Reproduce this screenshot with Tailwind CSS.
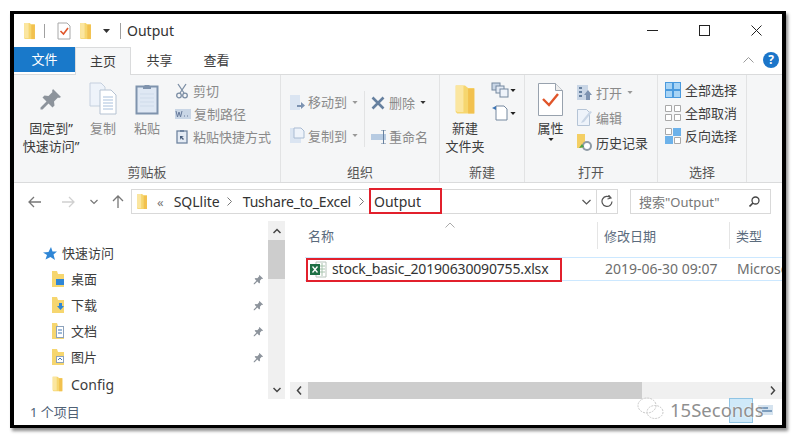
<!DOCTYPE html>
<html lang="zh">
<head>
<meta charset="UTF-8">
<title>Output</title>
<script src="https://cdn.jsdelivr.net/npm/@tailwindcss/browser@4"></script>
</head>
<body class="bg-white w-[793px] h-[440px] overflow-hidden [font-family:'Noto_Sans','Noto_Sans_CJK_SC',sans-serif] text-[13px] leading-[18px] text-[#3c3c3c]">

<svg class="hidden">
  <symbol id="folder" viewBox="0 0 12 20"><path d="M0 1h6l2 1.500h4V19H1l-1-1z" fill="#f6d66f"/><path d="M0 1h5v17H1l-1-1z" fill="#fbe6a0"/><path d="M8 3h4v16H8z" fill="#f2c14f"/></symbol>
  <symbol id="pin" viewBox="0 0 24 24"><path d="M14 2l8 8-2 1-1-.5-4 4 .5 4-2 2-4-4-6 6-2 0 0-2 6-6-4-4 2-2 4 .5 4-4-.500-1z" fill="#8d949c"/></symbol>
  <symbol id="caret" viewBox="0 0 7 4"><path d="M0 0h7L3.500 4z"/></symbol>
</svg>

<div class="relative ml-[10px] mt-[11px] w-[776px] h-[417px] border-x-[4px] border-t-[3px] border-b-[3px] border-black bg-white shadow-[2px_3px_3px_rgba(0,0,0,0.45)] flex flex-col">

  <!-- title bar -->
  <div class="h-[33px] flex items-center shrink-0">
    <svg class="ml-[10px] w-[11px] h-[18px]"><use href="#folder"/></svg>
    <div class="ml-[9px] w-px h-[14px] bg-[#a0a0a0]"></div>
    <svg class="ml-[12px] w-[14px] h-[18px]" viewBox="0 0 14 18"><path d="M1 1h9l3 3v13H1z" fill="#fff" stroke="#a8a8a8"/><path d="M3.500 9l3 3 4.500-6" fill="none" stroke="#e0552a" stroke-width="1.600"/></svg>
    <svg class="ml-[9px] w-[11px] h-[18px]"><use href="#folder"/></svg>
    <svg class="ml-[12px] w-[7px] h-[4px] fill-[#333]"><use href="#caret"/></svg>
    <div class="ml-[10px] w-px h-[16px] bg-[#a0a0a0]"></div>
    <span class="ml-[6px] text-[14px] text-[#333]">Output</span>
    <div class="ml-auto flex items-center pr-[20px]">
      <div class="w-[11px] h-px bg-[#222]"></div>
      <div class="ml-[41px] w-[11px] h-[11px] border border-[#222]"></div>
      <svg class="ml-[41px] w-[11px] h-[11px]" viewBox="0 0 11 11"><path d="M.5.5l10 10M10.500.5l-10 10" stroke="#222" fill="none"/></svg>
    </div>
  </div>

  <!-- tabs -->
  <div class="h-[27px] flex shrink-0 relative z-10">
    <div class="w-[61px] h-[25px] bg-[#1979ca] text-white text-center leading-[25px]">文件</div>
    <div class="w-[56px] h-[28px] bg-[#f5f6f7] border-x border-t border-[#dadbdc] text-center leading-[26px]">主页</div>
    <div class="w-[57px] text-center leading-[26px]">共享</div>
    <div class="w-[57px] text-center leading-[26px]">查看</div>
    <div class="ml-auto flex items-center h-[25px] pr-[3px]">
      <svg class="w-[11px] h-[7px] mr-[9px]" viewBox="0 0 11 7"><path d="M.5 6.500l5-5 5 5" fill="none" stroke="#9a9a9a"/></svg>
      <div class="w-[16px] h-[16px] rounded-full bg-[#1b75c9] text-white text-[12px] font-bold leading-[16px] text-center">?</div>
    </div>
  </div>

  <!-- ribbon -->
  <div class="h-[109px] shrink-0 bg-[#f5f6f7] border-y border-[#dadbdc] flex">

    <div class="w-[267px] border-r border-[#e2e3e4] flex flex-col">
      <div class="h-[88px] flex pl-[6px]">
        <div class="w-[62px] flex flex-col items-center">
          <div class="h-[44px] pt-[12px]"><svg class="w-[24px] h-[24px]"><use href="#pin"/></svg></div>
          <span>固定到”</span><span>快速访问”</span>
        </div>
        <div class="ml-[2px] w-[38px] flex flex-col items-center text-[#8a8a8a]">
          <div class="h-[44px] pt-[7px]">
            <svg class="w-[28px] h-[33px]" viewBox="0 0 28 33"><path d="M1 1h11l4 4v19H1z" fill="#eef3fa" stroke="#c5d0de"/><path d="M11 8h11l5 5v19H11z" fill="#fff" stroke="#b5c2d2"/><path d="M14 15h10M14 18h10M14 21h10M14 24h10M14 27h10" stroke="#a9c0dc"/></svg>
          </div>
          <span>复制</span>
        </div>
        <div class="ml-[6px] w-[38px] flex flex-col items-center text-[#8a8a8a]">
          <div class="h-[44px] pt-[7px]">
            <svg class="w-[24px] h-[33px]" viewBox="0 0 24 33"><rect x="1.500" y="4.500" width="21" height="27" fill="#dfe8f4" stroke="#7f93ad" stroke-width="2"/><path d="M8 5l2-2h4l2 2v2H8z" fill="#7f93ad"/><path d="M5 12h14M5 16h14M5 20h14M5 24h14" stroke="#cfdbea"/></svg>
          </div>
          <span>粘贴</span>
        </div>
        <div class="ml-[9px] flex flex-col pt-[4px] text-[#8a8a8a]">
          <div class="h-[23px] flex items-center">
            <svg class="w-[12px] h-[16px] ml-[1px] mr-[5px]" viewBox="0 0 12 16"><path d="M2 1l6 9M10 1L4 10" stroke="#7c8ea5" stroke-width="1.300"/><circle cx="3" cy="12.500" r="2.300" fill="none" stroke="#7c8ea5" stroke-width="1.300"/><circle cx="9" cy="12.500" r="2.300" fill="none" stroke="#7c8ea5" stroke-width="1.300"/></svg>
            <span>剪切</span>
          </div>
          <div class="h-[23px] flex items-center">
            <svg class="w-[16px] h-[10px] mr-[3px]" viewBox="0 0 16 10"><rect width="16" height="10" fill="#c9d6e6"/><path d="M1 2l1.500 6L4 3l1.500 5L7 2" fill="none" stroke="#66799a"/><path d="M9 7h1M12 7h1" stroke="#66799a"/></svg>
            <span>复制路径</span>
          </div>
          <div class="h-[23px] flex items-center">
            <svg class="w-[12px] h-[15px] ml-[1px] mr-[5px]" viewBox="0 0 12 15"><rect x="1" y="2" width="10" height="12" fill="#e4ebf4" stroke="#6f84a0" stroke-width="1.300"/><path d="M4 1h4v2H4z" fill="#6f84a0"/><path d="M4 11l0-4 4 0-2 1 2 2-1 1-2-2z" fill="#4a5f7d"/></svg>
            <span>粘贴快捷方式</span>
          </div>
        </div>
      </div>
      <div class="text-center text-[#555]">剪贴板</div>
    </div>

    <div class="w-[159px] border-r border-[#e2e3e4] flex flex-col">
      <div class="h-[88px] flex pl-[9px] pt-[16px] text-[#8a8a8a]">
        <div class="w-[75px] border-r border-[#e2e3e4] h-[56px] flex flex-col gap-[11px]">
          <div class="h-[23px] flex items-center">
            <svg class="w-[15px] h-[17px] mr-[3px]" viewBox="0 0 15 17"><path d="M0 1h10v15H0z" fill="#dbe5f2"/><path d="M7 11h4V8l4 3.500L11 15v-2H7z" fill="#7d93b1"/></svg>
            <span>移动到</span><svg class="ml-[5px] w-[6px] h-[3px] fill-[#999]"><use href="#caret"/></svg>
          </div>
          <div class="h-[23px] flex items-center">
            <svg class="w-[15px] h-[17px] mr-[3px]" viewBox="0 0 15 17"><path d="M0 1h11v15H0z" fill="#dbe5f2"/><path d="M4 1h7l3 3v7H4z" fill="#eef3fa" stroke="#a9bbd2"/></svg>
            <span>复制到</span><svg class="ml-[5px] w-[6px] h-[3px] fill-[#999]"><use href="#caret"/></svg>
          </div>
        </div>
        <div class="pl-[6px] flex flex-col gap-[11px]">
          <div class="h-[23px] flex items-center">
            <svg class="w-[14px] h-[14px] mr-[4px]" viewBox="0 0 14 14"><path d="M1.500 1.500l11 11M12.500 1.500l-11 11" stroke="#66809f" stroke-width="2.600"/></svg>
            <span>删除</span><svg class="ml-[5px] w-[6px] h-[3px] fill-[#333]"><use href="#caret"/></svg>
          </div>
          <div class="h-[23px] flex items-center">
            <svg class="w-[16px] h-[14px] mr-[2px]" viewBox="0 0 16 14"><rect y="4" width="15" height="6" fill="#b7cbe2"/><path d="M10 0h5M10 14h5M12.500 0v14" stroke="#66809f"/></svg>
            <span>重命名</span>
          </div>
        </div>
      </div>
      <div class="text-center text-[#555]">组织</div>
    </div>

    <div class="w-[85px] border-r border-[#e2e3e4] flex flex-col">
      <div class="h-[88px] flex pl-[4px]">
        <div class="w-[42px] flex flex-col items-center">
          <div class="h-[44px] pt-[9px]"><svg class="w-[22px] h-[31px]"><use href="#folder"/></svg></div>
          <span>新建</span><span>文件夹</span>
        </div>
        <div class="ml-[5px] flex flex-col pt-[7px] gap-[7px]">
          <div class="flex items-center">
            <svg class="w-[18px] h-[16px]" viewBox="0 0 18 16"><rect x="1" y="1" width="8" height="7" fill="#c9d6e6" stroke="#75889f"/><rect x="5" y="4" width="8" height="7" fill="#e4ebf4" stroke="#75889f"/><rect x="9" y="7" width="8" height="8" fill="#eef3fa" stroke="#75889f"/></svg>
            <svg class="ml-[1px] w-[6px] h-[3px] fill-[#222]"><use href="#caret"/></svg>
          </div>
          <div class="flex items-center">
            <svg class="w-[18px] h-[16px]" viewBox="0 0 18 16"><path d="M5 1h8l3 3v11H5z" fill="#fff" stroke="#75889f"/><path d="M1 3l4-2v4z" fill="#3f76b5"/></svg>
            <svg class="ml-[1px] w-[6px] h-[3px] fill-[#222]"><use href="#caret"/></svg>
          </div>
        </div>
      </div>
      <div class="text-center text-[#555]">新建</div>
    </div>

    <div class="w-[133px] border-r border-[#e2e3e4] flex flex-col">
      <div class="h-[88px] flex pl-[13px]">
        <div class="w-[25px] flex flex-col items-center">
          <div class="h-[44px] pt-[8px]">
            <svg class="w-[25px] h-[33px]" viewBox="0 0 25 33"><path d="M.5.5h17l7 7v25H.5z" fill="#fff" stroke="#98a2ae"/><path d="M17.500.5v7h7" fill="#eee" stroke="#98a2ae"/><path d="M5 16l6 6 9-11" fill="none" stroke="#e0552a" stroke-width="2.400"/></svg>
          </div>
          <span class="whitespace-nowrap">属性</span>
          <svg class="mt-[1px] w-[6px] h-[3px] fill-[#222]"><use href="#caret"/></svg>
        </div>
        <div class="ml-[14px] flex flex-col pt-[6px] gap-[2px] text-[#8a8a8a]">
          <div class="h-[23px] flex items-center">
            <svg class="w-[15px] h-[17px] mr-[4px]" viewBox="0 0 15 17"><path d="M0 1h11v15H0z" fill="#c9d6e6"/><path d="M2 4h3M2 8h3M2 12h3" stroke="#66809f" stroke-width="2"/><path d="M11 6l4 5h-2v5H9v-5H7z" fill="#7d93b1"/></svg>
            <span>打开</span><svg class="ml-[5px] w-[6px] h-[3px] fill-[#999]"><use href="#caret"/></svg>
          </div>
          <div class="h-[23px] flex items-center">
            <svg class="w-[15px] h-[17px] mr-[4px]" viewBox="0 0 15 17"><path d="M.5.5h9l3 3v13H.5z" fill="#eef3fa" stroke="#b5c4d6"/><path d="M5 12l8-10 2 1-8 10-3 1z" fill="#c9d6e6"/></svg>
            <span>编辑</span>
          </div>
          <div class="h-[23px] flex items-center text-[#3c3c3c]">
            <svg class="w-[15px] h-[17px] mr-[4px]" viewBox="0 0 15 17"><path d="M0 0h8v14H0z" fill="#f4cf64"/><circle cx="10" cy="12" r="5" fill="#8e9aa4"/><circle cx="10" cy="12" r="3" fill="#fff"/><path d="M2 14l3-4 2 3z" fill="#4ea24a"/></svg>
            <span>历史记录</span>
          </div>
        </div>
      </div>
      <div class="text-center text-[#555]">打开</div>
    </div>

    <div class="w-[89px] border-r border-[#e2e3e4] flex flex-col">
      <div class="h-[88px] pl-[7px] pt-[3px]">
        <div class="h-[23px] flex items-center">
          <svg class="w-[16px] h-[16px] mr-[4px]" viewBox="0 0 16 16"><path d="M0 0h16v16H0z" fill="#4a9ade"/><path d="M1 1h6v6H1zM9 1h6v6H9zM1 9h6v6H1zM9 9h6v6H9z" fill="#a8d4f5"/></svg>
          <span>全部选择</span>
        </div>
        <div class="h-[23px] flex items-center">
          <svg class="w-[16px] h-[16px] mr-[4px]" viewBox="0 0 16 16"><path d="M.5.5h6v6h-6zM9.500.5h6v6h-6zM.5 9.500h6v6h-6zM9.500 9.500h6v6h-6z" fill="#fff" stroke="#a9a9a9"/></svg>
          <span>全部取消</span>
        </div>
        <div class="h-[23px] flex items-center">
          <svg class="w-[16px] h-[16px] mr-[4px]" viewBox="0 0 16 16"><path d="M.5.500h6v6h-6zM9.500 9.500h6v6h-6z" fill="#fff" stroke="#a9a9a9"/><path d="M8 0h8v8H8zM0 8h8v8H0z" fill="#6db2ea"/></svg>
          <span>反向选择</span>
        </div>
      </div>
      <div class="text-center text-[#555]">选择</div>
    </div>
  </div>

  <!-- address row -->
  <div class="h-[38px] shrink-0 flex items-center pb-[1px]">
    <svg class="ml-[14px] w-[13px] h-[12px]" viewBox="0 0 13 12"><path d="M13 6H1M6 1L1 6l5 5" fill="none" stroke="#777" stroke-width="1.300"/></svg>
    <svg class="ml-[21px] w-[13px] h-[12px]" viewBox="0 0 13 12"><path d="M0 6h12M7 1l5 5-5 5" fill="none" stroke="#d0d0d0" stroke-width="1.300"/></svg>
    <svg class="ml-[15px] w-[8px] h-[6px]" viewBox="0 0 8 6"><path d="M.5 1L4 4.500 7.500 1" fill="none" stroke="#777" stroke-width="1.200"/></svg>
    <svg class="ml-[14px] w-[12px] h-[13px]" viewBox="0 0 12 13"><path d="M6 13V1M1 6l5-5 5 5" fill="none" stroke="#777" stroke-width="1.300"/></svg>
    <div class="ml-[7px] w-[487px] h-[25px] border border-[#d9d9d9] flex items-center">
      <svg class="ml-[5px] w-[10px] h-[17px]"><use href="#folder"/></svg>
      <span class="ml-[10px] text-[#777]">«</span>
      <span class="ml-[10px] text-[#333] text-[14px]">SQLlite</span>
      <svg class="ml-[7px] w-[5px] h-[9px]" viewBox="0 0 5 9"><path d="M.5.5l4 4-4 4" fill="none" stroke="#777"/></svg>
      <span class="ml-[11px] text-[#333] text-[14px] tracking-[-0.2px]">Tushare_to_Excel</span>
      <svg class="ml-[8px] w-[5px] h-[9px]" viewBox="0 0 5 9"><path d="M.5.5l4 4-4 4" fill="none" stroke="#777"/></svg>
      <span class="ml-[10px] text-[#333] text-[14px]">Output</span>
      <svg class="ml-auto mr-[5px] w-[9px] h-[6px]" viewBox="0 0 9 6"><path d="M.5 1l4 4 4-4" fill="none" stroke="#555" stroke-width="1.200"/></svg>
      <div class="w-px h-full bg-[#d9d9d9]"></div>
      <svg class="mx-[4px] w-[12px] h-[13px]" viewBox="0 0 12 13"><path d="M9.500 2.800A5 5 0 1 0 11 6.500M7.500 0l2.500 3-3.500 1" fill="none" stroke="#555" stroke-width="1.200"/></svg>
    </div>
    <div class="ml-[12px] w-[141px] h-[25px] border border-[#d9d9d9] flex items-center pl-[8px] text-[#777]">
      <span>搜索"Output"</span>
      <svg class="ml-auto mr-[10px] w-[11px] h-[11px]" viewBox="0 0 11 11"><circle cx="6.500" cy="4.500" r="3.500" fill="none" stroke="#444" stroke-width="1.300"/><path d="M4 7l-3.500 3.500" stroke="#444" stroke-width="1.600"/></svg>
    </div>
  </div>

  <!-- main area -->
  <div class="flex-1 min-h-0 flex">
    <div class="w-[271px] shrink-0 flex">
      <div class="w-[254px] pt-[19px]">
        <div class="h-[26px] flex items-center pl-[29px]">
          <svg class="w-[14px] h-[13px] mr-[5px]" viewBox="0 0 14 13"><path d="M8 0l1.500 4.500H14L10.500 7.500 12 13 7.500 10 2.500 12.500 4 8 0 5.500 5.500 5z" fill="#2f86d6"/></svg>
          <span>快速访问</span>
        </div>
        <div class="h-[26px] flex items-center pl-[38px]">
          <svg class="w-[12px] h-[16px] mr-[7px]" viewBox="0 0 12 16"><path d="M0 0h5l1 3h6v13H0z" fill="#f6d66f"/><rect x="4" y="8" width="8" height="6" fill="#2f86d6"/></svg>
          <span>桌面</span>
          <svg class="ml-auto mr-[4px] w-[11px] h-[11px]"><use href="#pin"/></svg>
        </div>
        <div class="h-[26px] flex items-center pl-[38px]">
          <svg class="w-[12px] h-[16px] mr-[7px]" viewBox="0 0 12 16"><path d="M0 0h5l1 3h6v13H0z" fill="#f6d66f"/><path d="M7 6h3v3h2l-3.500 4L5 9h2z" fill="#2f86d6"/></svg>
          <span>下载</span>
          <svg class="ml-auto mr-[4px] w-[11px] h-[11px]"><use href="#pin"/></svg>
        </div>
        <div class="h-[26px] flex items-center pl-[38px]">
          <svg class="w-[12px] h-[16px] mr-[7px]" viewBox="0 0 12 16"><path d="M0 0h5l1 3h6v13H0z" fill="#f6d66f"/><rect x="4.500" y="3.500" width="7" height="11" fill="#fff" stroke="#8da2bb"/><path d="M6 7h4M6 10h4" stroke="#3f76b5"/></svg>
          <span>文档</span>
          <svg class="ml-auto mr-[4px] w-[11px] h-[11px]"><use href="#pin"/></svg>
        </div>
        <div class="h-[26px] flex items-center pl-[38px]">
          <svg class="w-[12px] h-[16px] mr-[7px]" viewBox="0 0 12 16"><path d="M0 0h5l1 3h6v13H0z" fill="#f6d66f"/><rect x="4.500" y="7.500" width="7" height="6" fill="#fff" stroke="#8da2bb"/><path d="M6 11l2-2 2 2" stroke="#3f76b5" fill="none"/></svg>
          <span>图片</span>
          <svg class="ml-auto mr-[4px] w-[11px] h-[11px]"><use href="#pin"/></svg>
        </div>
        <div class="h-[26px] mt-[1px] flex items-center pl-[38px]">
          <svg class="w-[11px] h-[16px] mr-[8px]"><use href="#folder"/></svg>
          <span class="text-[14px] pt-[1px]">Config</span>
        </div>
      </div>
      <div class="w-[17px] bg-[#f0f0f0] flex flex-col items-center justify-between">
        <div class="w-full">
          <div class="h-[19px] flex items-center justify-center"><svg class="w-[8px] h-[6px]" viewBox="0 0 8 6"><path d="M.5 5L4 1.500 7.500 5" fill="none" stroke="#444" stroke-width="1.500"/></svg></div>
          <div class="h-[39px] bg-[#cdcdcd]"></div>
        </div>
        <div class="h-[18px] flex items-center justify-center"><svg class="w-[8px] h-[6px]" viewBox="0 0 8 6"><path d="M.5 1L4 4.500 7.500 1" fill="none" stroke="#444" stroke-width="1.500"/></svg></div>
      </div>
    </div>

    <div class="relative flex-1 min-w-0 flex flex-col overflow-hidden">
      <div class="h-[36px] flex text-[#5b6b7d] pt-[1px] relative shrink-0">
        <div class="w-[313px] border-r border-[#e5e5e5] h-[27px] pl-[23px] leading-[28px]">名称</div>
        <div class="w-[132px] border-r border-[#e5e5e5] h-[27px] pl-[6px] leading-[28px]">修改日期</div>
        <div class="pl-[6px] leading-[28px]">类型</div>
        <svg class="absolute left-[160px] top-[1px] w-[10px] h-[6px]" viewBox="0 0 10 6"><path d="M.5 5.500l4.500-4.500 4.500 4.500" fill="none" stroke="#aaa"/></svg>
      </div>
      <div class="ml-[20px] h-[24px] border-y border-[#cce8ff] flex items-center whitespace-nowrap shrink-0">
        <svg class="ml-[5px] w-[17px] h-[17px] shrink-0" viewBox="0 0 17 17"><path d="M6 1h10v15H6z" fill="#fff" stroke="#b8c4bc"/><path d="M9 5h6M9 8h6M9 11h6M12 2v13" stroke="#a8c4ae"/><path d="M0 3h10v11H0z" fill="#1d7044"/><path d="M2.500 5.500l5 6M7.500 5.500l-5 6" stroke="#fff" stroke-width="1.300"/></svg>
        <span class="ml-[5px] w-[273px] shrink-0 text-[14px] text-[#333] tracking-[-0.16px]">stock_basic_20190630090755.xlsx</span>
        <span class="w-[132px] shrink-0 text-[14px] text-[#6d6d6d]">2019-06-30 09:07</span>
        <span class="text-[14px] text-[#6d6d6d]">Microsoft</span>
      </div>
      <div class="mt-auto h-[17px] bg-[#f0f0f0] flex items-center shrink-0 ml-[5px]">
        <div class="w-[18px] flex justify-center"><svg class="w-[6px] h-[9px]" viewBox="0 0 6 9"><path d="M5 .5L1.500 4.500 5 8.500" fill="none" stroke="#444" stroke-width="1.500"/></svg></div>
        <div class="w-[334px] h-full bg-[#cdcdcd]"></div>
        <div class="ml-auto w-[18px] flex justify-center"><svg class="w-[6px] h-[9px]" viewBox="0 0 6 9"><path d="M1 .5L4.500 4.500 1 8.500" fill="none" stroke="#444" stroke-width="1.500"/></svg></div>
      </div>
    </div>
  </div>

  <!-- status bar -->
  <div class="h-[26px] shrink-0 pl-[16px] leading-[26px] text-[#4f6175]">1 个项目</div>

  <!-- annotations over the window -->
  <div class="absolute left-[355px] top-[174px] w-[73px] h-[26px] border-2 border-[#e2202c]"></div>
  <div class="absolute left-[292px] top-[244px] w-[256px] h-[24px] border-2 border-[#e2202c]"></div>

  <!-- watermark -->
  <div class="absolute left-[715px] top-[384px] w-[24px] h-[25px] bg-[#cfe9f9] border border-[#8fc4e4]"></div>
  <svg class="absolute left-[744px] top-[391px] w-[15px] h-[10px]" viewBox="0 0 15 10"><rect width="15" height="10" fill="#d5e3ef"/><path d="M1 3h9M4 6h10" stroke="#5f87ad" stroke-width="1.500"/></svg>
  <div class="absolute left-[623px] top-[381px] flex items-center">
    <svg class="w-[27px] h-[23px]" viewBox="0 0 27 23"><ellipse cx="10" cy="8.500" rx="9" ry="7.500" fill="none" stroke="#c9c9c9" stroke-dasharray="2 1"/><ellipse cx="18" cy="15" rx="8" ry="6.500" fill="none" stroke="#c9c9c9" stroke-dasharray="2 1"/></svg>
    <span class="ml-[6px] mt-[3px] text-[18.500px] leading-[24px] text-[#8f8f8f] [text-shadow:0_0_2px_#fff]">15Seconds</span>
  </div>
</div>

</body>
</html>
